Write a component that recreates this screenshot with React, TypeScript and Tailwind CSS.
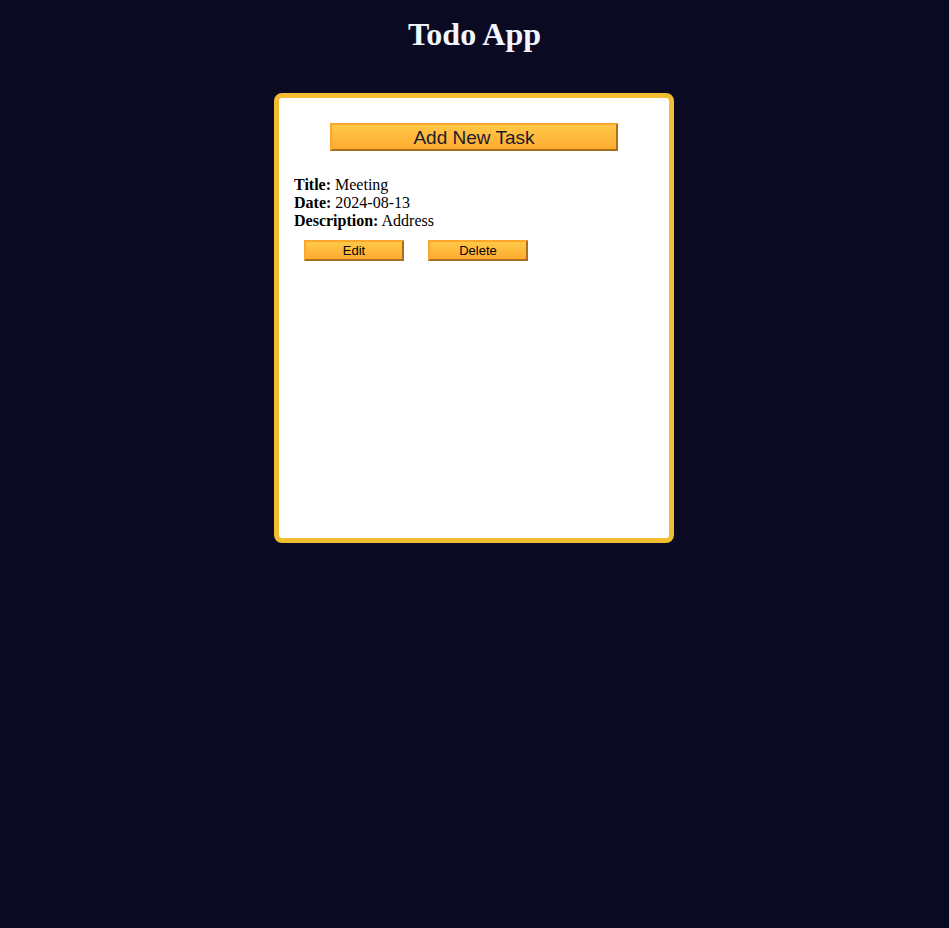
const tasks = [{ title: "Meeting", date: "2024-08-13", description: "Address" }];

export default function App() {
  return (
    <div className="min-h-[928px] bg-[#0a0a22] font-['Liberation_Serif',serif] flex flex-col items-center">
      <h1 className="text-[32px] leading-[37px] font-bold text-[#f4f6ff] mt-[16px]">Todo App</h1>

      <div className="mt-[40px] mr-[1px] w-[400px] h-[450px] bg-white border-[5px] border-[#f3bd31] rounded-[8px] px-[15px] pt-[25px]">
        <div className="flex justify-center">
          <button className="w-[288px] h-[28px] border-2 border-t-[#fca62c] border-l-[#fca62c] border-b-[#a87020] border-r-[#a87020] bg-gradient-to-b from-[#ffc847] to-[#ffab30] font-['Liberation_Sans',sans-serif] text-[19px] leading-none text-[#1b1b2e]">
            Add New Task
          </button>
        </div>

        {tasks.map((t, i) => (
          <div key={i} className="mt-[25px] text-[16px] leading-[18px] text-black">
            <div>
              <b>Title:</b> {t.title}
            </div>
            <div>
              <b>Date:</b> {t.date}
            </div>
            <div>
              <b>Description:</b> {t.description}
            </div>
            <div className="flex gap-[24px] pl-[10px] mt-[10px]">
              <button className="w-[100px] h-[21px] border-2 border-t-[#fca62c] border-l-[#fca62c] border-b-[#a87020] border-r-[#a87020] bg-gradient-to-b from-[#ffc847] to-[#ffab30] font-['Liberation_Sans',sans-serif] text-[13px] leading-none text-black">
                Edit
              </button>
              <button className="w-[100px] h-[21px] border-2 border-t-[#fca62c] border-l-[#fca62c] border-b-[#a87020] border-r-[#a87020] bg-gradient-to-b from-[#ffc847] to-[#ffab30] font-['Liberation_Sans',sans-serif] text-[13px] leading-none text-black">
                Delete
              </button>
            </div>
          </div>
        ))}
      </div>
    </div>
  );
}
